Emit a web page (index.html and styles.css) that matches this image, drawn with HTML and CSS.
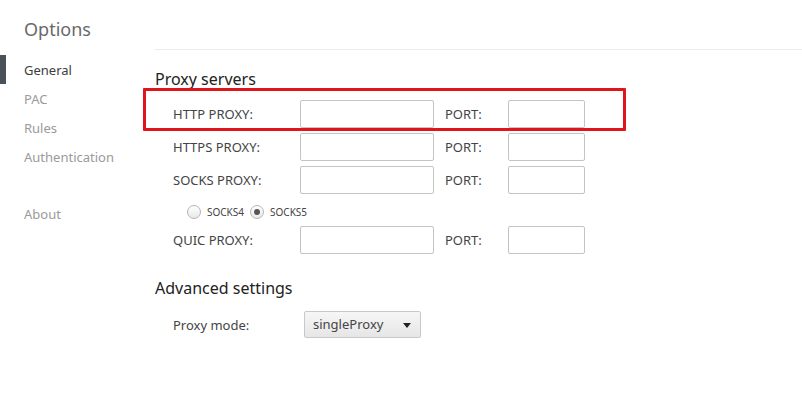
FILE: index.html
```html
<!DOCTYPE html>
<html>
<head>
<meta charset="utf-8">
<link rel="stylesheet" href="styles.css">
</head>
<body>
<div class="page">
  <aside class="sidebar">
    <h1 class="title">Options</h1>
    <nav class="nav">
      <div class="nav-item active">General</div>
      <div class="nav-item">PAC</div>
      <div class="nav-item">Rules</div>
      <div class="nav-item">Authentication</div>
      <div class="nav-item about">About</div>
    </nav>
  </aside>
  <main class="main">
    <div class="topbar"></div>
    <h2 class="section-title">Proxy servers</h2>
    <div class="rows">
      <div class="row highlighted">
        <span class="label">HTTP PROXY:</span>
        <span class="input host"></span>
        <span class="port-label">PORT:</span>
        <span class="input port"></span>
        <span class="marker"></span>
      </div>
      <div class="row">
        <span class="label">HTTPS PROXY:</span>
        <span class="input host"></span>
        <span class="port-label">PORT:</span>
        <span class="input port"></span>
      </div>
      <div class="row">
        <span class="label">SOCKS PROXY:</span>
        <span class="input host"></span>
        <span class="port-label">PORT:</span>
        <span class="input port"></span>
      </div>
      <div class="radios">
        <span class="radio"></span><span class="radio-label">SOCKS4</span>
        <span class="radio checked"></span><span class="radio-label">SOCKS5</span>
      </div>
      <div class="row">
        <span class="label">QUIC PROXY:</span>
        <span class="input host"></span>
        <span class="port-label">PORT:</span>
        <span class="input port"></span>
      </div>
    </div>
    <h2 class="section-title advanced">Advanced settings</h2>
    <div class="mode-row">
      <span class="label">Proxy mode:</span>
      <span class="select">singleProxy<span class="caret"></span></span>
    </div>
  </main>
</div>
</body>
</html>
```

FILE: styles.css
```css
* { box-sizing: border-box; }
html, body { margin: 0; padding: 0; background: #fff; }
body {
  font-family: "Segoe UI", "Noto Sans", "Open Sans", sans-serif;
  color: #444;
  width: 802px;
  height: 416px;
  overflow: hidden;
}
.page { display: flex; }
.sidebar { width: 155px; flex: none; }
.title {
  margin: 16px 0 0 24px;
  font-size: 18px;
  font-weight: 400;
  color: #6a6a6a;
  line-height: 26px;
}
.nav { margin-top: 13px; }
.nav-item {
  padding-left: 24px;
  height: 29px;
  line-height: 30px;
  font-size: 13px;
  color: #9a9a9a;
  position: relative;
}
.nav-item.active { color: #3c3c3c; }
.nav-item.active::before {
  content: "";
  position: absolute;
  left: 0; top: 0;
  width: 6px; height: 29px;
  background: #4b5158;
}
.nav-item.about { margin-top: 28px; }
.main { flex: 1; }
.topbar { height: 50px; border-bottom: 1px solid #ececec; }
.section-title {
  margin: 18px 0 0 0;
  font-size: 16px;
  font-weight: 400;
  color: #222;
  line-height: 22px;
}
.rows { margin-top: 10px; padding-left: 18px; }
.row {
  display: flex;
  align-items: center;
  height: 28px;
  margin-bottom: 5px;
  position: relative;
}
.label { width: 127px; font-size: 13px; color: #444; }
.input {
  display: block;
  height: 28px;
  border: 1px solid #c4c4c4;
  border-radius: 2px;
  background: #fff;
}
.host { width: 134px; }
.port-label { width: 74px; padding-left: 11px; font-size: 13px; color: #444; }
.port { width: 77px; }
.marker {
  position: absolute;
  left: -30px; top: -12px;
  width: 483px; height: 43px;
  border: 3px solid #e0141b;
  border-radius: 1px;
}
.radios {
  display: flex;
  align-items: center;
  height: 25px;
  margin-bottom: 2px;
  padding-left: 14px;
}
.radio {
  width: 14px; height: 14px;
  border-radius: 50%;
  border: 1px solid #b5b5b5;
  background: linear-gradient(#fff, #e8e8e8);
  position: relative;
  margin-right: 6px;
}
.radio.checked::after {
  content: "";
  position: absolute;
  left: 3px; top: 3px;
  width: 6px; height: 6px;
  border-radius: 50%;
  background: #555;
}
.radio-label { font-size: 10px; color: #444; margin-right: 6px; }
.advanced { margin-top: 23px; }
.mode-row {
  display: flex;
  align-items: center;
  margin-top: 12px;
  padding-left: 18px;
  height: 27px;
}
.mode-row .label { width: 131px; }
.select {
  position: relative;
  width: 117px; height: 27px;
  border: 1px solid #c8c8c8;
  border-radius: 2px;
  background: linear-gradient(#f6f6f6, #e6e6e6);
  font-size: 13px;
  color: #444;
  line-height: 25px;
  padding-left: 8px;
}
.caret {
  position: absolute;
  right: 9px; top: 11px;
  width: 0; height: 0;
  border-left: 4px solid transparent;
  border-right: 4px solid transparent;
  border-top: 5px solid #222;
}
```
